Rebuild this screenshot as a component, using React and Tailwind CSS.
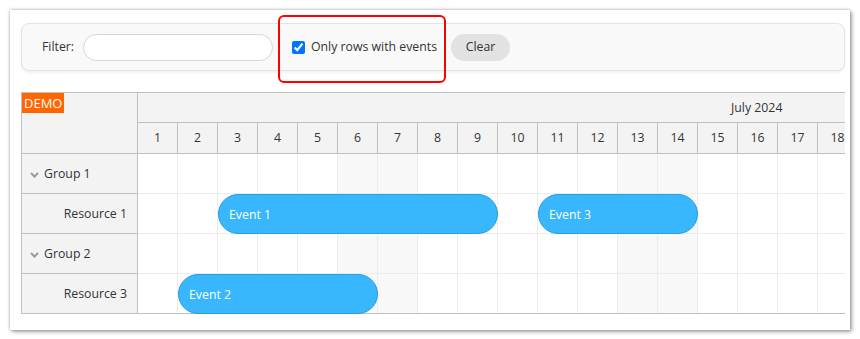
import React from "react";

const font = { fontFamily: '"Open Sans", "Noto Sans", sans-serif' };

const days = Array.from({ length: 18 }, (_, i) => i + 1);
const weekend = [6, 7, 13, 14];

const rows = [
  { type: "group", name: "Group 1", events: [] },
  {
    type: "resource",
    name: "Resource 1",
    events: [
      { text: "Event 1", start: 3, end: 9 },
      { text: "Event 3", start: 11, end: 14 },
    ],
  },
  { type: "group", name: "Group 2", events: [] },
  { type: "resource", name: "Resource 3", events: [{ text: "Event 2", start: 2, end: 6 }] },
];

const Chevron = () => (
  <svg width="9" height="6" viewBox="0 0 9 6" className="shrink-0">
    <polyline points="1,1 4.5,4.6 8,1" fill="none" stroke="#999" strokeWidth="2" />
  </svg>
);

export default function App() {
  return (
    <div className="pt-[10px] pl-[10px] bg-white min-h-[339px] text-[12.3px] text-[#333]" style={font}>
      <div className="relative w-[840px] h-[320px] bg-white shadow-[0_0_3px_rgba(0,0,0,0.35),2px_2px_4px_rgba(0,0,0,0.3)] pt-[13px] pl-[11px]">
        {/* toolbar */}
        <div className="w-[824px] h-[48px] flex items-center bg-[#f9f9f9] border border-[#e3e3e3] rounded-[8px] shadow-[0_2px_3px_rgba(0,0,0,0.06)] pl-[20px]">
          <span className="w-[41px]">Filter:</span>
          <div className="w-[190px] h-[27px] rounded-full border border-[#d6d6d6] bg-white" />
          <input
            type="checkbox"
            checked
            readOnly
            className="ml-[19px] w-[13px] h-[13px] m-0 accent-[#0075ff]"
          />
          <span className="ml-[6px] w-[126px] whitespace-nowrap">Only rows with events</span>
          <button className="ml-[14px] w-[59px] h-[27px] rounded-full bg-[#e2e2e2] text-[#333] text-[12.3px]" style={font}>
            Clear
          </button>
        </div>

        {/* annotation */}
        <div className="absolute left-[268px] top-[5px] w-[168px] h-[68px] border-2 border-[#ff0000] rounded-[6px]" />

        {/* scheduler */}
        <div className="mt-[21px] w-[824px] flex border-l border-t border-[#c0c0c0] overflow-hidden">
          {/* row headers */}
          <div className="w-[116px] shrink-0 bg-[#f3f3f3] border-r border-[#c0c0c0]">
            <div className="relative h-[61px] border-b border-[#c0c0c0]">
              <div className="absolute left-0 top-0 w-[42px] h-[20px] bg-[#ff6600] text-white text-[13px] leading-[20px] pl-[2px]">
                DEMO
              </div>
            </div>
            {rows.map((r) => (
              <div
                key={r.name}
                className={`h-[40px] border-b border-[#c0c0c0] flex items-center pt-[2px] ${
                  r.type === "group" ? "pl-[8px] gap-[5px]" : "justify-end pr-[10px]"
                }`}
              >
                {r.type === "group" && <Chevron />}
                <span>{r.name}</span>
              </div>
            ))}
          </div>

          {/* time area */}
          <div className="flex-1 overflow-hidden">
            <div className="w-[720px]">
              <div className="h-[30px] bg-[#f3f3f3] border-b border-[#c0c0c0] flex items-center pl-[593px] pt-[2px]">
                July 2024
              </div>
              <div className="h-[31px] bg-[#f3f3f3] border-b border-[#c0c0c0] flex">
                {days.map((d) => (
                  <div key={d} className="w-[40px] shrink-0 border-r border-[#c0c0c0] flex items-center justify-center pt-[1px]">
                    {d}
                  </div>
                ))}
              </div>
              {rows.map((r, i) => (
                <div
                  key={r.name}
                  className={`relative h-[40px] border-b flex ${i === rows.length - 1 ? "border-[#c0c0c0]" : "border-[#ececec]"}`}
                >
                  {days.map((d) => (
                    <div
                      key={d}
                      className={`w-[40px] shrink-0 border-r border-[#ececec] ${weekend.includes(d) ? "bg-[#f8f8f8]" : "bg-white"}`}
                    />
                  ))}
                  {r.events.map((e) => (
                    <div
                      key={e.text}
                      className="absolute top-0 h-[40px] rounded-full bg-[#38b6fe] border border-[#2a9ce0] text-white flex items-center pl-[10px] pt-[2px]"
                      style={{ left: (e.start - 1) * 40, width: (e.end - e.start + 1) * 40 }}
                    >
                      {e.text}
                    </div>
                  ))}
                </div>
              ))}
            </div>
          </div>
        </div>
      </div>
    </div>
  );
}
